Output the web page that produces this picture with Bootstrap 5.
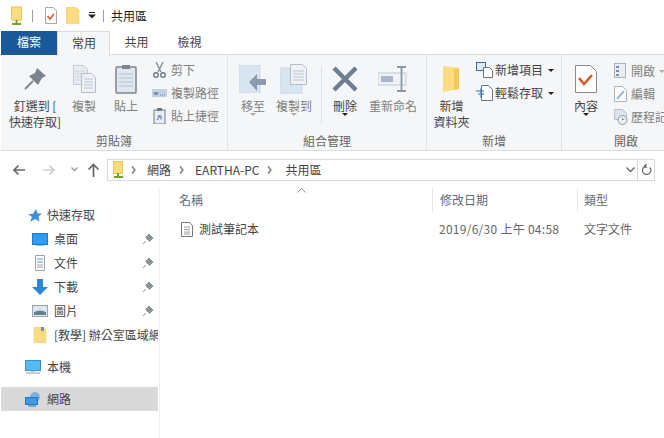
<!DOCTYPE html>
<html lang="zh-Hant"><head><meta charset="utf-8">
<title>共用區</title>
<link rel="stylesheet" href="https://cdn.jsdelivr.net/npm/bootstrap@5.3.0/dist/css/bootstrap.min.css">
<style>
html,body{width:664px;height:438px;overflow:hidden;background:#fff}
body{font-family:"Noto Sans CJK TC","Liberation Sans",sans-serif;font-size:12px;color:#444;line-height:16px}
svg{display:block;flex:none}
.tbar{height:31px;padding-left:10px}
.vsep{width:1px;height:12px;background:#a0a0a0}
.tabs{height:24px;border-bottom:1px solid #dadbdc}
.tabx{height:24px;text-align:center;line-height:22px;color:#444}
.tab-file{width:56px;margin-left:1px;background:#19589b;color:#fff}
.tab-on{width:53px;background:#f5f6f7;border:1px solid #dadbdc;border-bottom:0;height:25px;line-height:21px;padding-left:1px}
.tab-o{width:53px}
.rib{height:96px;background:#f5f6f7;border-bottom:1px solid #dadbdc;margin-left:1px}
.grp{border-right:1px solid #e2e3e4;height:95px;flex:none}
.g1{width:227px}.g2{width:199px}.g3{width:135px}.g4{flex:1;min-width:0;border-right:0;overflow:hidden}
.gbody{height:78px;padding-top:5px}
.gname{text-align:center;color:#666;height:17px;line-height:15px}
.big{display:flex;flex-direction:column;align-items:center;text-align:center;color:#808080;line-height:15px;flex:none}
.big .ic{height:38px;display:flex;align-items:center;justify-content:center}
.two{line-height:16px}
.dark{color:#444}
.drop{width:0;height:0;border-left:3px solid transparent;border-right:3px solid transparent;border-top:3px solid #aaa}
.drop.k{border-top-color:#222}
.sm{display:flex;flex-direction:column;gap:2px;flex:none}
.smi{height:21px;display:flex;align-items:center;gap:4px;color:#808080;white-space:nowrap}
.smi.dark{color:#444}
.dsep{width:1px;height:58px;background:#e2e3e4}
.addr{height:38px;padding-top:8px;padding-left:12px}
.abox{height:22px;border:1px solid #d9d9d9;flex:1;display:flex;align-items:center;padding-left:5px;color:#444}
.crumb{margin:0 11px 0 8px}
.crumb.c1{margin-left:6px}
.crumb.c3{margin-right:13px}
.rbox{height:22px;width:18px;border:1px solid #d9d9d9;margin-right:9px;margin-left:-1px}
.lay{height:249px}
.side{width:160px;height:249px;border-right:1px solid #f0f0f0;padding-top:14px}
.srow{height:24px;display:flex;align-items:center;color:#444;white-space:nowrap;overflow:hidden;width:157px;margin-left:1px}
.srow .lab{margin-left:6px}
.lv1{padding-left:31px}
.lv0{padding-left:24px}
.sel{background:#d9d9d9}
.gap8{height:8px}
.main{flex:1;position:relative}
.hd{height:24px;margin-top:-1px;color:#5f6b75}
.hc{height:24px;line-height:24px;padding-left:7px}
.hc+.hc{border-left:1px solid #e5e5e5}
.hc1{width:272px;padding-left:19px}.hc2{width:145px}.hc3{flex:1;padding-left:6px}
.sortm{position:absolute;left:137px;top:-1px}
.frow{height:22px;margin-top:6px;line-height:22px}
.fname{width:272px;padding-left:21px;gap:6px}
.fdate{width:145px;padding-left:7px;color:#666;letter-spacing:.27px;white-space:nowrap}
.ftype{padding-left:7px;color:#666}
</style></head>
<body>
<div class="tbar d-flex align-items-center">
 <svg width="14" height="20" viewBox="0 0 14 20"><rect x="1.500" y="1" width="10" height="13" fill="#fbdc7e" stroke="#e3c55f"/><path d="M6.500 14v3M2 18h9" stroke="#6fa22e" stroke-width="2"/></svg>
 <div class="vsep" style="margin-left:8px"></div>
 <svg style="margin-left:11px" width="14" height="17" viewBox="0 0 14 17"><path d="M1.500 .5h8l3 3v13h-11z" fill="#fff" stroke="#a8a8a8"/><path d="M3.500 9l2.500 3 4-5" fill="none" stroke="#d9582c" stroke-width="1.500"/></svg>
 <svg width="14" height="17" viewBox="0 0 14 17" style="margin-left:8px"><path d="M0 0h9l4 3v14H0z" fill="#fcdc83" stroke="#eecb68" stroke-width=".6"/></svg>
 <svg style="margin-left:8px" width="8" height="7" viewBox="0 0 8 7"><path d="M1 .5h6" stroke="#222"/><path d="M0 2.500h8L4 6.500z" fill="#222"/></svg>
 <div class="vsep" style="margin-left:7px"></div>
 <span style="margin-left:7px;color:#222">共用區</span>
</div>
<div class="tabs d-flex">
 <div class="tabx tab-file">檔案</div>
 <div class="tabx tab-on">常用</div>
 <div class="tabx tab-o">共用</div>
 <div class="tabx tab-o">檢視</div>
</div>
<div class="rib d-flex">
 <div class="grp g1">
  <div class="gbody d-flex">
   <div class="big dark" style="width:60px;margin-left:4px"><div class="ic"><svg width="22" height="22" viewBox="0 0 22 22"><path d="M1 21l8-8" stroke="#7b838c" stroke-width="1.800"/><path d="M13 0l9 8-4 2-4 7-9-9 6-3z" fill="#7b838c"/></svg></div><div class="two">釘選到 [<br>快速存取]</div></div>
   <div class="big" style="width:38px"><div class="ic"><svg width="25" height="28" viewBox="0 0 25 28"><path d="M1.500 .5h10l4 4v15h-14z" fill="#e6ecf3" stroke="#c3cbd4"/><path d="M3 6h10M3 9h10M3 12h10M3 15h6" stroke="#d0d7df"/><path d="M9.500 8.500h10l4 4v15h-14z" fill="#edf1f6" stroke="#b5bec8"/><path d="M12 14h9M12 17h9M12 20h9M12 23h9" stroke="#bcc5cf"/></svg></div><div>複製</div></div>
   <div class="big" style="width:46px"><div class="ic"><svg width="22" height="30" viewBox="0 0 22 30"><rect x="1" y="3" width="20" height="26" rx="1" fill="#dfe7f0" stroke="#7c8690" stroke-width="1.500"/><rect x="7" y="1" width="8" height="4" fill="#7c8690"/><path d="M4 10h14M4 14h14M4 18h14M4 22h14" stroke="#b8c3ce"/></svg></div><div>貼上</div></div>
   <div class="sm" style="margin-left:3px;margin-top:-1px">
    <div class="smi"><svg width="15" height="16" viewBox="0 0 15 16"><path d="M4 0l5 10M11 0L6 10" stroke="#8a929b" stroke-width="1.500"/><circle cx="4" cy="13" r="2.300" fill="none" stroke="#6d7a87" stroke-width="1.400"/><circle cx="11" cy="13" r="2.300" fill="none" stroke="#6d7a87" stroke-width="1.400"/></svg><span>剪下</span></div>
    <div class="smi"><svg width="15" height="16" viewBox="0 0 15 16"><rect x="0" y="4" width="15" height="8" fill="#c3d0e3"/><path d="M2 7l1 3 1-3 1 3 1-3M8 10h1M10 10h1M12 10h1" stroke="#5a6c85" stroke-width=".7" fill="none"/></svg><span>複製路徑</span></div>
    <div class="smi"><svg width="15" height="16" viewBox="0 0 15 16"><rect x="2" y="2" width="11" height="14" fill="#e8edf3" stroke="#6f7a85"/><rect x="5" y="0" width="5" height="3" fill="#6f7a85"/><path d="M5 12l3-4M5.500 8H9v3.500" stroke="#3b6ea5" fill="none"/></svg><span>貼上捷徑</span></div>
   </div>
  </div>
  <div class="gname">剪貼簿</div>
 </div>
 <div class="grp g2">
  <div class="gbody d-flex">
   <div class="big" style="width:42px;margin-left:4px"><div class="ic"><svg width="28" height="28" viewBox="0 0 28 28"><rect x="0" y="0" width="21" height="28" fill="#d9e4f1" stroke="#ced9e6"/><path d="M10 17l8-8v5h9v6h-9v6z" fill="#8b9bad"/></svg></div><div>移至</div><div class="drop"></div></div>
   <div class="big" style="width:40px"><div class="ic"><svg width="28" height="30" viewBox="0 0 28 30"><rect x="0" y="4" width="22" height="26" fill="#d9e4f1" stroke="#ced9e6"/><path d="M10.500 .5h12l4 4v16h-16z" fill="#eef2f7" stroke="#b5bec8"/><path d="M13 7h11M13 10h11M13 13h11M13 16h11" stroke="#bcc5cf"/></svg></div><div>複製到</div><div class="drop"></div></div>
   <div class="dsep" style="margin:6px 6px 0 7px"></div>
   <div class="big dark" style="width:34px"><div class="ic"><svg width="26" height="26" viewBox="0 0 26 26"><path d="M2 2l22 22M24 2L2 24" stroke="#6d7e90" stroke-width="4.500"/></svg></div><div>刪除</div><div class="drop k"></div></div>
   <div class="big" style="width:56px;margin-left:3px"><div class="ic"><svg width="30" height="26" viewBox="0 0 30 26"><rect x="0" y="7" width="28" height="12" fill="#eef2f7" stroke="#c0cad5"/><rect x="3" y="10" width="12" height="6" fill="#a8b8ca"/><path d="M19 1h9M23.500 1v24M19 25h9" stroke="#8896a5" stroke-width="1.800"/></svg></div><div>重新命名</div></div>
  </div>
  <div class="gname">組合管理</div>
 </div>
 <div class="grp g3">
  <div class="gbody d-flex">
   <div class="big dark" style="width:43px;margin-left:3px"><div class="ic"><svg width="20" height="28" viewBox="0 0 20 28"><path d="M1 1l16 2v21l-16 3z" fill="#fcdc83"/><path d="M17 3v21l-5 1V4z" fill="#f3c857"/></svg></div><div class="two">新增<br>資料夾</div></div>
   <div class="sm" style="margin-top:-1px;gap:1px;margin-left:3px">
    <div class="smi dark" style="gap:2px;height:22px"><svg width="17" height="16" viewBox="0 0 17 16"><rect x=".5" y=".5" width="9" height="8" fill="#dfe9f4" stroke="#3d6d9c"/><path d="M7.500 5.500h6l3 3v7h-9z" fill="#fff" stroke="#6b747e"/></svg><span>新增項目</span><div class="drop k" style="margin:0 0 0 3px"></div></div>
    <div class="smi dark" style="gap:2px;height:22px"><svg width="17" height="16" viewBox="0 0 17 16"><path d="M5.500 .5h7l4 4v11h-11z" fill="#fff" stroke="#6b747e"/><path d="M0 6h8M2 9h6M5 3v10" stroke="#2f6fa8" fill="none"/></svg><span>輕鬆存取</span><div class="drop k" style="margin:0 0 0 3px"></div></div>
   </div>
  </div>
  <div class="gname">新增</div>
 </div>
 <div class="grp g4">
  <div class="gbody d-flex">
   <div class="big dark" style="width:38px;margin-left:5px"><div class="ic"><svg width="22" height="28" viewBox="0 0 22 28"><path d="M.5 .5h15l6 6v21H.5z" fill="#fff" stroke="#8b8b8b"/><path d="M4 13l5 6 8-9" fill="none" stroke="#d9582c" stroke-width="2.600"/></svg></div><div>內容</div><div class="drop k"></div></div>
   <div class="sm" style="margin-top:0;gap:1px;margin-left:9px">
    <div class="smi" style="height:22px;gap:3px"><svg width="14" height="16" viewBox="0 0 14 16"><rect x=".5" y=".5" width="11" height="14" fill="#e8edf3" stroke="#aab3bc"/><path d="M2 4h3M2 8h3M2 12h3" stroke="#7990a8" stroke-width="2"/></svg><span>開啟</span><div class="drop" style="margin:0 0 0 1px"></div></div>
    <div class="smi" style="height:22px;gap:3px"><svg width="14" height="16" viewBox="0 0 14 16"><path d="M.5 .5h8l4 4v11H.5z" fill="#fff" stroke="#aab3bc"/><path d="M3 13l7-8" stroke="#9fbbd5" stroke-width="2"/></svg><span>編輯</span></div>
    <div class="smi" style="height:22px;gap:3px"><svg width="14" height="16" viewBox="0 0 14 16"><path d="M.5 .5h8l4 4v6h-12z" fill="#dce4ec" stroke="#b8c1cb"/><circle cx="8.500" cy="11" r="4.500" fill="#eef2f6" stroke="#8b96a1"/><path d="M8.500 8.500V11l2-1" stroke="#8b96a1" fill="none"/></svg><span>歷程記</span></div>
   </div>
  </div>
  <div class="gname" style="text-align:left;padding-left:52px">開啟</div>
 </div>
</div>
<div class="addr d-flex align-items-start">
 <svg style="margin-top:4px" width="14" height="14" viewBox="0 0 14 14"><path d="M13 7H2M6.500 2.500L2 7l4.500 4.500" fill="none" stroke="#666" stroke-width="1.700"/></svg>
 <svg style="margin-top:4px;margin-left:16px" width="14" height="14" viewBox="0 0 14 14"><path d="M1 7h11M7.500 2.500L12 7l-4.500 4.500" fill="none" stroke="#cfcfcf" stroke-width="1.700"/></svg>
 <svg style="margin-top:8px;margin-left:15px" width="7" height="5" viewBox="0 0 7 5"><path d="M.5 .5L3.500 3.500 6.500 .5" fill="none" stroke="#9a9a9a" stroke-width="1.300"/></svg>
 <svg style="margin-top:4px;margin-left:9px" width="13" height="14" viewBox="0 0 13 14"><path d="M6.500 14V2M1.500 6.500l5-5 5 5" fill="none" stroke="#666" stroke-width="1.700"/></svg>
 <div class="abox" style="margin-left:7px">
  <svg width="12" height="18" viewBox="0 0 12 18"><rect x=".5" y=".5" width="9" height="12" fill="#fbdc7e" stroke="#e3c55f"/><path d="M5 12v3M1 16h9" stroke="#6fa22e" stroke-width="2"/></svg>
  <svg class="crumb c1" width="5" height="8" viewBox="0 0 5 8"><path d="M1 .5L4 4 1 7.500" fill="none" stroke="#777" stroke-width="1.300"/></svg><span>網路</span>
  <svg class="crumb" width="5" height="8" viewBox="0 0 5 8"><path d="M1 .5L4 4 1 7.500" fill="none" stroke="#777" stroke-width="1.300"/></svg><span>EARTHA-PC</span>
  <svg class="crumb c3" width="5" height="8" viewBox="0 0 5 8"><path d="M1 .5L4 4 1 7.500" fill="none" stroke="#777" stroke-width="1.300"/></svg><span>共用區</span>
  <svg class="ms-auto" style="margin-right:2px" width="9" height="6" viewBox="0 0 9 6"><path d="M.5 .5l4 4 4-4" fill="none" stroke="#666" stroke-width="1.300"/></svg>
 </div>
 <div class="rbox d-flex align-items-center justify-content-center"><svg width="11" height="12" viewBox="0 0 11 12"><path d="M8.800 3.500a4.200 4.200 0 1 1-3.300-1.400M5.500 0l-2 2 2 2" fill="none" stroke="#666" stroke-width="1.200"/></svg></div>
</div>
<div class="lay d-flex">
 <div class="side">
  <div class="srow" style="padding-left:27px"><svg width="14" height="13" viewBox="0 0 14 13"><path d="M8 0l1.500 4.500H14l-3.500 3 1 5L7 10l-5 3 2-5L0 5h5z" fill="#3c8fd8"/></svg><span class="lab" style="margin-left:5px">快速存取</span></div>
  <div class="srow lv1"><svg width="16" height="13" viewBox="0 0 16 13"><rect x=".5" y=".5" width="15" height="11" fill="#2e9bf0" stroke="#1b7fd0"/><path d="M4 12h8" stroke="#1b7fd0"/></svg><span class="lab">桌面</span><svg class="ms-auto" style="margin-right:5px" width="10" height="10" viewBox="0 0 10 10"><path d="M0 10l3-3M3 3l3-3 4 4-3 3-1 0-3-3z" fill="#8d959c" stroke="#8d959c"/></svg></div>
  <div class="srow lv1"><svg width="16" height="16" viewBox="0 0 16 16"><path d="M3.500 .5h9v15h-9z" fill="#fff" stroke="#9aa3ab"/><path d="M5 4h6M5 7h6" stroke="#4d9ad6"/><path d="M5 10h6M5 12h6" stroke="#9aa3ab"/></svg><span class="lab">文件</span><svg class="ms-auto" style="margin-right:5px" width="10" height="10" viewBox="0 0 10 10"><path d="M0 10l3-3M3 3l3-3 4 4-3 3-1 0-3-3z" fill="#8d959c" stroke="#8d959c"/></svg></div>
  <div class="srow lv1"><svg width="16" height="16" viewBox="0 0 16 16"><path d="M5 0h6v8h5l-8 8-8-8h5z" fill="#2e86d6"/></svg><span class="lab">下載</span><svg class="ms-auto" style="margin-right:5px" width="10" height="10" viewBox="0 0 10 10"><path d="M0 10l3-3M3 3l3-3 4 4-3 3-1 0-3-3z" fill="#8d959c" stroke="#8d959c"/></svg></div>
  <div class="srow lv1"><svg width="16" height="12" viewBox="0 0 16 12"><rect x=".5" y=".5" width="15" height="11" fill="#dbe6ee" stroke="#9aa3ab"/><path d="M2 7c4-2 8-2 12 0v3H2z" fill="#5f7f8f"/></svg><span class="lab">圖片</span><svg class="ms-auto" style="margin-right:5px" width="10" height="10" viewBox="0 0 10 10"><path d="M0 10l3-3M3 3l3-3 4 4-3 3-1 0-3-3z" fill="#8d959c" stroke="#8d959c"/></svg></div>
  <div class="srow lv1"><svg width="16" height="16" viewBox="0 0 16 16"><path d="M2 0h9l3 3v13H2z" fill="#fcdc83" stroke="#f0d070" stroke-width=".5"/><path d="M9 0h3v4H9z" fill="#6f9a8a"/></svg><span class="lab">[教學] 辦公室區域網路共用</span></div>
  <div class="gap8"></div>
  <div class="srow lv0"><svg width="16" height="14" viewBox="0 0 16 14"><rect x=".5" y=".5" width="15" height="10" fill="#55baf2" stroke="#3a90c8"/><path d="M6 11h4M1 13h14" stroke="#8b9aa8"/></svg><span class="lab">本機</span></div>
  <div class="gap8"></div>
  <div class="srow lv0 sel"><svg width="16" height="15" viewBox="0 0 16 15"><circle cx="10" cy="5" r="5" fill="#7cb3dd"/><rect x=".5" y="5.500" width="12" height="7" fill="#3d9ae4" stroke="#2577bb"/><path d="M3 14h8" stroke="#2577bb"/></svg><span class="lab">網路</span></div>
 </div>
 <div class="main">
  <svg class="sortm" width="9" height="5" viewBox="0 0 9 5"><path d="M.5 4.500l4-4 4 4" fill="none" stroke="#8a8a8a"/></svg>
  <div class="hd d-flex">
   <div class="hc hc1">名稱</div><div class="hc hc2">修改日期</div><div class="hc hc3">類型</div>
  </div>
  <div class="frow d-flex">
   <div class="fname d-flex align-items-center"><svg width="12" height="15" viewBox="0 0 12 15"><path d="M.5 .5h8l3 3v11H.5z" fill="#fff" stroke="#777"/><path d="M3 5h6M3 7.500h6M3 10h6M3 12h6" stroke="#999"/></svg><span>測試筆記本</span></div>
   <div class="fdate">2019/6/30 上午 04:58</div>
   <div class="ftype">文字文件</div>
  </div>
 </div>
</div>
</body></html>
